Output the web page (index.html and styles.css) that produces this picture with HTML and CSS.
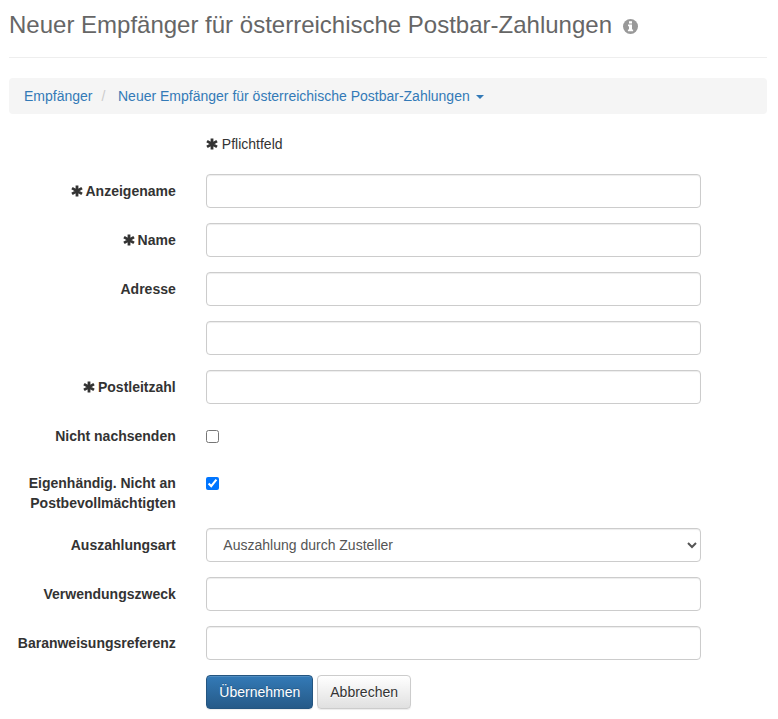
FILE: index.html
```html
<!DOCTYPE html>
<html lang="de">
<head>
<meta charset="utf-8">
<title>Neuer Empfänger für österreichische Postbar-Zahlungen</title>
<link rel="stylesheet" href="styles.css">
</head>
<body>
<svg class="sprite" aria-hidden="true">
  <symbol id="asterisk" viewBox="0 0 12 12">
    <path d="M6 .4v11.2M1 3.1l10 5.8M11 3.1L1 8.9" fill="none" stroke="currentColor" stroke-width="2.8"/>
  </symbol>
</svg>
<main class="page">
  <header class="page-header">
    <h1>Neuer Empfänger für österreichische Postbar-Zahlungen</h1>
    <svg class="info" viewBox="0 0 15 15" aria-hidden="true">
      <circle cx="7.5" cy="7.5" r="7.5" fill="#999"/>
      <path d="M6 2.2h3v2.2H6zM5 5.5h4v5h1.1v1.8H4.9v-1.8H6V7.2H5z" fill="#fff"/>
    </svg>
  </header>
  <nav class="breadcrumb">
    <a href="#">Empfänger</a>
    <span class="separator">/</span>
    <a href="#">Neuer Empfänger für österreichische Postbar-Zahlungen<span class="caret"></span></a>
  </nav>
  <form class="form">
    <div class="row hint">
      <div class="field"><svg class="req"><use href="#asterisk"/></svg>Pflichtfeld</div>
    </div>
    <div class="row">
      <label for="display"><svg class="req"><use href="#asterisk"/></svg>Anzeigename</label>
      <div class="field"><input class="control" id="display" type="text"></div>
    </div>
    <div class="row">
      <label for="name"><svg class="req"><use href="#asterisk"/></svg>Name</label>
      <div class="field"><input class="control" id="name" type="text"></div>
    </div>
    <div class="row">
      <label for="address">Adresse</label>
      <div class="field"><input class="control" id="address" type="text"></div>
    </div>
    <div class="row">
      <div class="field"><input class="control" type="text"></div>
    </div>
    <div class="row">
      <label for="zip"><svg class="req"><use href="#asterisk"/></svg>Postleitzahl</label>
      <div class="field"><input class="control" id="zip" type="text"></div>
    </div>
    <div class="row check">
      <label for="forward">Nicht nachsenden</label>
      <div class="field"><input id="forward" type="checkbox"></div>
    </div>
    <div class="row check">
      <label for="personal">Eigenhändig. Nicht an Postbevollmächtigten</label>
      <div class="field"><input id="personal" type="checkbox" checked></div>
    </div>
    <div class="row">
      <label for="payout">Auszahlungsart</label>
      <div class="field"><select class="control" id="payout"><option>Auszahlung durch Zusteller</option></select></div>
    </div>
    <div class="row">
      <label for="purpose">Verwendungszweck</label>
      <div class="field"><input class="control" id="purpose" type="text"></div>
    </div>
    <div class="row">
      <label for="reference">Baranweisungsreferenz</label>
      <div class="field"><input class="control" id="reference" type="text"></div>
    </div>
    <div class="row">
      <div class="field actions">
        <button class="btn primary" type="button">Übernehmen</button>
        <button class="btn" type="button">Abbrechen</button>
      </div>
    </div>
  </form>
</main>
</body>
</html>
```
FILE: styles.css
```css
* { box-sizing: border-box; }
html { overflow: hidden; }
body {
  margin: 0;
  font: 14px/20px "Liberation Sans", Arial, sans-serif;
  color: #333;
  background: #fff;
}
.sprite { display: none; }
.page { width: 758px; margin: 0 0 0 9px; }
.page-header {
  display: flex;
  align-items: flex-start;
  height: 58px;
  padding-top: 12px;
  border-bottom: 1px solid #eee;
}
h1 {
  margin: 0;
  font-size: 24px;
  font-weight: 400;
  line-height: 26px;
  color: #666;
}
.info { width: 15px; height: 15px; margin: 7px 0 0 11px; }
.breadcrumb {
  display: flex;
  height: 36px;
  margin: 20px 0;
  padding: 8px 15px;
  background: #f5f5f5;
  border-radius: 4px;
}
a { color: #337ab7; text-decoration: none; }
.separator { width: 25.5px; padding-left: 9px; color: #ccc; }
.caret {
  display: inline-block;
  margin-left: 6.5px;
  vertical-align: middle;
  border-top: 4px solid;
  border-right: 4px solid transparent;
  border-left: 4px solid transparent;
}
.form { margin: 0 -15px; }
.row {
  display: flex;
  justify-content: flex-end;
  margin-bottom: 15px;
  padding-right: 8.3333%;
}
.hint { margin-bottom: 20px; }
.hint .req { margin-right: 3.5px; }
label {
  flex: 1;
  padding: 7px 15.6px 0 15px;
  font-weight: 700;
  text-align: right;
}
.field { width: 525px; padding: 0 15px; }
.check { min-height: 32px; }
.req { width: 12px; height: 12px; margin-right: 3px; vertical-align: -1px; }
.control {
  display: block;
  width: 100%;
  height: 34px;
  padding: 6px 12px;
  font: inherit;
  color: #555;
  background: #fff;
  border: 1px solid #ccc;
  border-radius: 4px;
  box-shadow: inset 0 1px 1px rgba(0, 0, 0, .075);
}
input[type="checkbox"] { display: block; width: 13px; height: 13px; margin: 11px 0 0; }
.actions { display: flex; gap: 4px; }
.btn {
  height: 34px;
  padding: 6px 12px;
  font: inherit;
  color: #333;
  text-shadow: 0 1px 0 #fff;
  background: linear-gradient(#fff, #e0e0e0);
  border: 1px solid #ccc;
  border-radius: 4px;
  box-shadow: inset 0 1px 0 rgba(255, 255, 255, .15), 0 1px 1px rgba(0, 0, 0, .075);
}
.primary {
  color: #fff;
  text-shadow: 0 -1px 0 rgba(0, 0, 0, .2);
  background: linear-gradient(#337ab7, #265a88);
  border-color: #245580;
}
```
